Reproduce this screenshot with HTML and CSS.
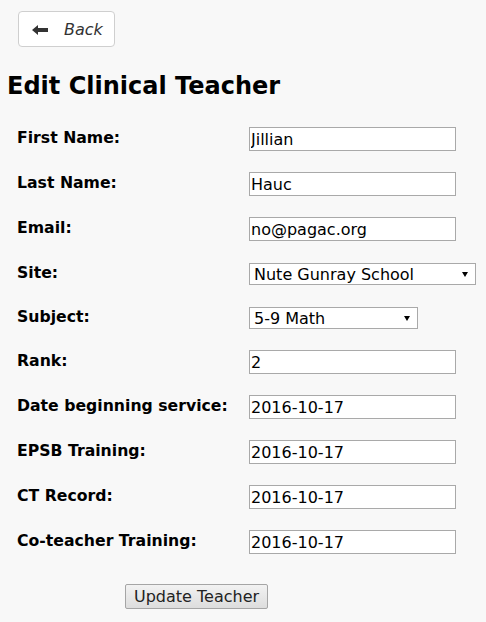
FILE: index.html
```html
<!DOCTYPE html>
<html>
<head>
<meta charset="utf-8">
<link rel="stylesheet" href="styles.css">
</head>
<body>
<div class="page">
  <div class="topbar">
    <a class="back-btn" href="#">
      <svg class="back-icon" width="16" height="10" viewBox="0 0 16 10"><path d="M0 5 L6 0 L6 3 L16 3 L16 7 L6 7 L6 10 Z" fill="#333"/></svg>
      <span class="back-text">Back</span>
    </a>
  </div>
  <h1 class="title">Edit Clinical Teacher</h1>
  <form class="form">
    <div class="row"><label class="label">First Name:</label><input class="field" type="text" value="Jillian"></div>
    <div class="row"><label class="label">Last Name:</label><input class="field" type="text" value="Hauc"></div>
    <div class="row"><label class="label">Email:</label><input class="field" type="text" value="no@pagac.org"></div>
    <div class="row"><label class="label">Site:</label><span class="select site"><span class="select-text">Nute Gunray School</span></span></div>
    <div class="row"><label class="label">Subject:</label><span class="select subject"><span class="select-text">5-9 Math</span></span></div>
    <div class="row"><label class="label">Rank:</label><input class="field" type="text" value="2"></div>
    <div class="row"><label class="label">Date beginning service:</label><input class="field" type="text" value="2016-10-17"></div>
    <div class="row"><label class="label">EPSB Training:</label><input class="field" type="text" value="2016-10-17"></div>
    <div class="row"><label class="label">CT Record:</label><input class="field" type="text" value="2016-10-17"></div>
    <div class="row"><label class="label">Co-teacher Training:</label><input class="field" type="text" value="2016-10-17"></div>
    <div class="actions"><button class="submit" type="button">Update Teacher</button></div>
  </form>
</div>
</body>
</html>
```
FILE: styles.css
```css
html, body {
  margin: 0;
  padding: 0;
  background: #f8f8f8;
}
body {
  font-family: "DejaVu Sans", Verdana, sans-serif;
  color: #000;
}
.page {
  padding: 11px 0 0 7px;
}
.topbar {
  padding-left: 11px;
}
.back-btn {
  display: inline-flex;
  align-items: center;
  box-sizing: border-box;
  width: 97px;
  height: 36px;
  padding-left: 13px;
  border: 1px solid #cfcfcf;
  border-radius: 4px;
  background: #fff;
  text-decoration: none;
  color: #333;
}
.back-icon {
  display: block;
  margin-top: 1px;
}
.back-text {
  margin-left: 16px;
  font-style: italic;
  font-size: 16px;
  color: #333;
}
.title {
  margin: 25px 0 0 0;
  font-size: 24px;
  font-weight: bold;
  line-height: 28px;
}
.form {
  display: flex;
  flex-direction: column;
  gap: 21px;
  margin-top: 27px;
  padding-left: 10px;
}
.row {
  display: grid;
  grid-template-columns: 232px auto;
  align-items: start;
}
.label {
  font-weight: bold;
  font-size: 15.7px;
  line-height: 18px;
  margin-top: 2px;
}
.field {
  box-sizing: border-box;
  width: 207px;
  height: 24px;
  margin: 0;
  padding: 0 1px;
  border: 1px solid #a9a9a9;
  background: #fff;
  font-family: "DejaVu Sans", Verdana, sans-serif;
  font-size: 16px;
  color: #000;
}
.select {
  position: relative;
  box-sizing: border-box;
  display: flex;
  align-items: center;
  height: 22px;
  margin-top: 1px;
  padding-left: 4px;
  border: 1px solid #a9a9a9;
  background: #fff;
  font-size: 16px;
}
.select::after {
  content: "";
  position: absolute;
  right: 7px;
  top: 8px;
  border-left: 3px solid transparent;
  border-right: 3px solid transparent;
  border-top: 5px solid #000;
}
.site { width: 227px; }
.subject { width: 169px; }
.actions {
  padding-left: 108px;
  margin-top: 9px;
}
.submit {
  box-sizing: border-box;
  width: 143px;
  height: 25px;
  margin: 0;
  padding: 0;
  border: 1px solid #a5a5a5;
  border-radius: 2px;
  background: linear-gradient(#f2f2f2, #dddddd);
  font-family: "DejaVu Sans", Verdana, sans-serif;
  font-size: 16px;
  color: #222;
}
```
